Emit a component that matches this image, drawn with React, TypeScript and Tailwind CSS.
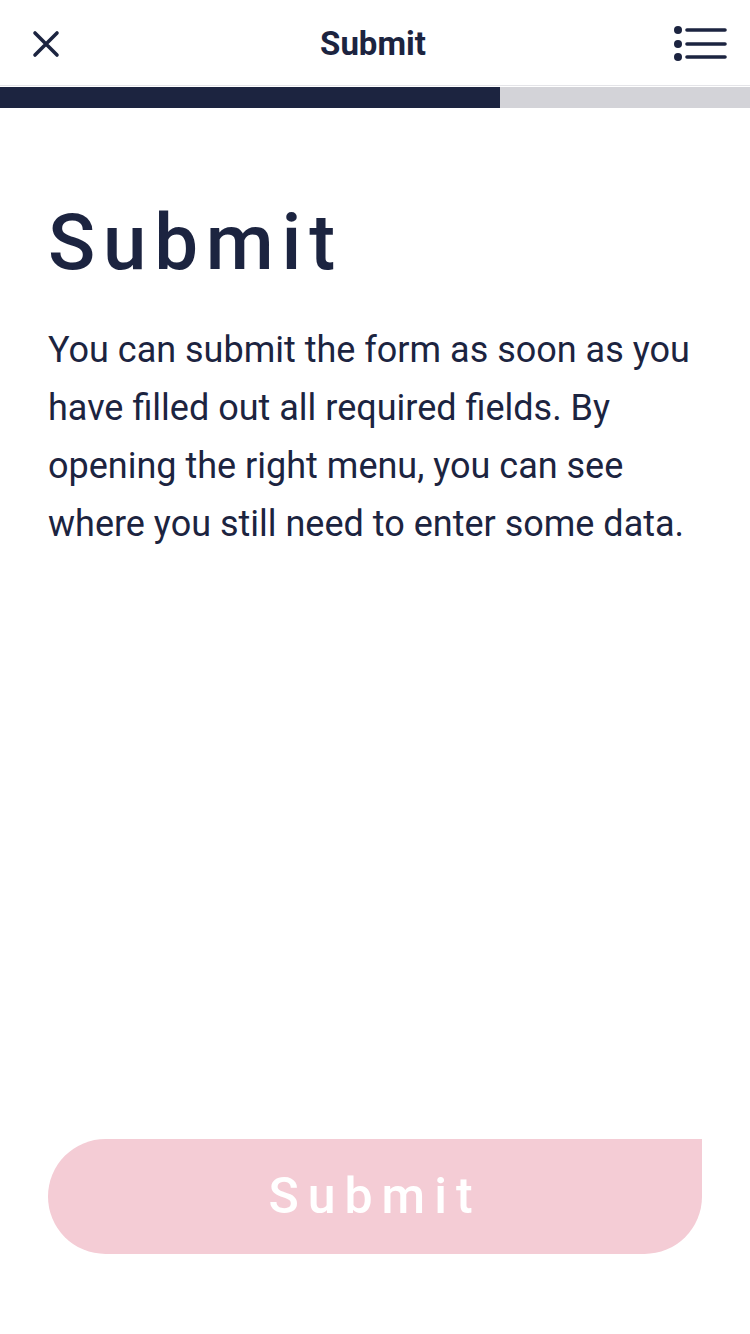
import React from "react";

export default function App() {
  const navy = "text-[#1c2440]";
  return (
    <div
      className="flex h-[1334px] w-[750px] flex-col bg-white"
      style={{ fontFamily: "Roboto, 'Liberation Sans', sans-serif" }}
    >
      <header className="flex h-[86px] items-center justify-between border-b border-[#e4e4e8] px-[30px]">
        <svg width="32" height="32" viewBox="0 0 32 32" className="mt-[2px]">
          <path d="M5 5 L27 27 M27 5 L5 27" stroke="#1c2440" strokeWidth="3.6" strokeLinecap="round" />
        </svg>
        <div className={`ml-[12px] mt-[3px] text-[33px] font-bold ${navy}`}>Submit</div>
        <svg width="56" height="40" viewBox="0 0 56 40" className="mr-[-8px] mt-[2px]">
          <circle cx="6" cy="6" r="4" fill="#1c2440" />
          <circle cx="6" cy="20" r="4" fill="#1c2440" />
          <circle cx="6" cy="33" r="4" fill="#1c2440" />
          <path d="M15 6 H53 M15 20 H53 M15 33 H53" stroke="#1c2440" strokeWidth="3.6" strokeLinecap="round" />
        </svg>
      </header>
      <div className="mt-[1px] flex h-[21px] w-full bg-[#d3d3d8]">
        <div className="h-full w-[500px] bg-[#1c2440]" />
      </div>
      <main className="flex flex-1 flex-col px-[48px]">
        <h1 className={`mt-[96px] text-[78px] font-medium leading-[78px] tracking-[0.1em] ${navy}`}>Submit</h1>
        <p className={`mt-[39px] text-[36px] leading-[58px] ${navy}`}>
          You can submit the form as soon as you have filled out all required fields. By opening the right menu, you can see where you still need to enter some data.
        </p>
        <div className="flex-1" />
        <button className="mb-[80px] flex h-[115px] w-full items-center justify-center rounded-l-full rounded-br-full rounded-tr-none bg-[#f4ccd5] text-[50px] font-medium tracking-[0.18em] text-white">
          Submit
        </button>
      </main>
    </div>
  );
}
